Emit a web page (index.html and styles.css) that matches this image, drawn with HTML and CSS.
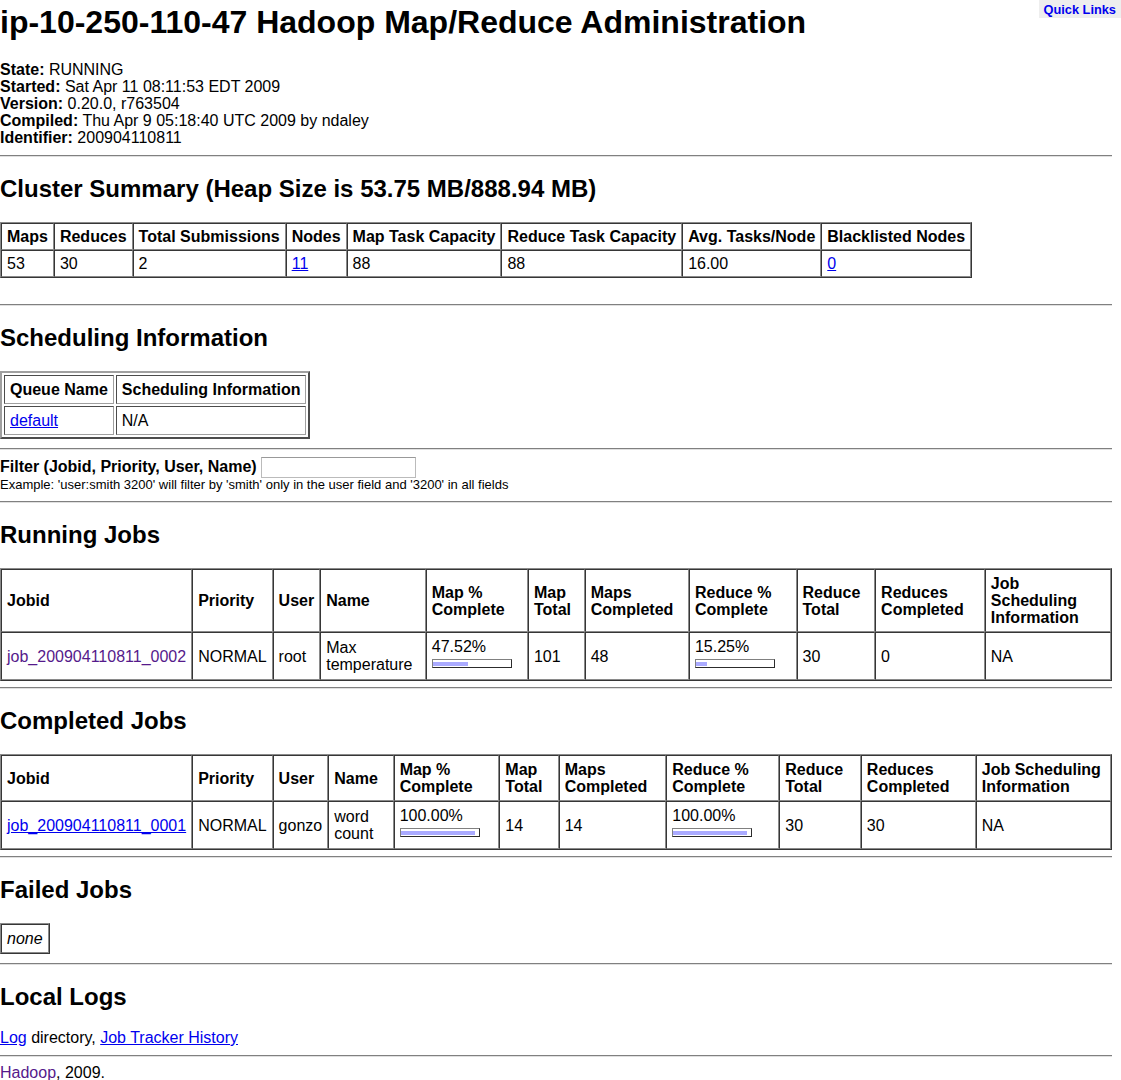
FILE: index.html
```
<!DOCTYPE html>
<html>
<head>
<meta charset="utf-8">
<title>ip-10-250-110-47 Hadoop Map/Reduce Administration</title>
<link rel="stylesheet" href="styles.css">
</head>
<body>
<div class="quicklinks"><a href="#quicklinks">Quick Links</a></div>
<h1>ip-10-250-110-47 Hadoop Map/Reduce Administration</h1>
<div class="info">
<b>State:</b> RUNNING<br>
<b>Started:</b> Sat Apr 11 08:11:53 EDT 2009<br>
<b>Version:</b> 0.20.0, r763504<br>
<b>Compiled:</b> Thu Apr 9 05:18:40 UTC 2009 by ndaley<br>
<b>Identifier:</b> 200904110811
</div>
<hr>
<h2>Cluster Summary (Heap Size is 53.75 MB/888.94 MB)</h2>
<table class="grid summary">
<tr><th>Maps</th><th>Reduces</th><th>Total Submissions</th><th>Nodes</th><th>Map Task Capacity</th><th>Reduce Task Capacity</th><th>Avg. Tasks/Node</th><th>Blacklisted Nodes</th></tr>
<tr><td>53</td><td>30</td><td>2</td><td><a href="#">11</a></td><td>88</td><td>88</td><td>16.00</td><td><a href="#">0</a></td></tr>
</table>
<hr>
<h2>Scheduling Information</h2>
<table class="sched">
<tr><th>Queue Name</th><th>Scheduling Information</th></tr>
<tr><td><a href="#">default</a></td><td>N/A</td></tr>
</table>
<hr>
<div class="filter-row"><b>Filter (Jobid, Priority, User, Name)</b> <input type="text" class="filter"></div>
<div class="small">Example: 'user:smith 3200' will filter by 'smith' only in the user field and '3200' in all fields</div>
<hr>
<h2>Running Jobs</h2>
<table class="grid data">
<tr><th>Jobid</th><th>Priority</th><th>User</th><th>Name</th><th>Map % Complete</th><th>Map Total</th><th>Maps Completed</th><th>Reduce % Complete</th><th>Reduce Total</th><th>Reduces Completed</th><th>Job Scheduling Information</th></tr>
<tr><td><a class="visited" href="#">job_200904110811_0002</a></td><td>NORMAL</td><td>root</td><td>Max temperature</td><td>47.52%<div class="bar"><div class="fill" style="width:47.52%"></div></div></td><td>101</td><td>48</td><td>15.25%<div class="bar"><div class="fill" style="width:15.25%"></div></div></td><td>30</td><td>0</td><td>NA</td></tr>
</table>
<hr>
<h2>Completed Jobs</h2>
<table class="grid data">
<tr><th>Jobid</th><th>Priority</th><th>User</th><th>Name</th><th>Map % Complete</th><th>Map Total</th><th>Maps Completed</th><th>Reduce % Complete</th><th>Reduce Total</th><th>Reduces Completed</th><th>Job Scheduling Information</th></tr>
<tr><td><a href="#">job_200904110811_0001</a></td><td>NORMAL</td><td>gonzo</td><td>word count</td><td>100.00%<div class="bar"><div class="fill" style="width:100%"></div></div></td><td>14</td><td>14</td><td>100.00%<div class="bar"><div class="fill" style="width:100%"></div></div></td><td>30</td><td>30</td><td>NA</td></tr>
</table>
<hr>
<h2>Failed Jobs</h2>
<table class="grid failed">
<tr><td><i>none</i></td></tr>
</table>
<hr>
<h2 class="logs-title">Local Logs</h2>
<a href="#">Log</a> directory, <a href="#">Job Tracker History</a>
<hr>
<a class="visited" href="#">Hadoop</a>, 2009.
</body>
</html>
```

FILE: styles.css
```
html, body {
  background: #ffffff;
}
body {
  margin: 0 9px 0 0;
  font-family: "Liberation Sans", Arial, Helvetica, sans-serif;
  font-size: 16px;
  line-height: 17px;
  color: #000;
}
a { color: #0000ee; }
a.visited { color: #551a8b; text-decoration: none; }
h1 {
  font-size: 32px;
  line-height: 37px;
  margin: 4px 0 20px 0;
}
h2 {
  font-size: 24px;
  line-height: 28px;
  margin: 18px 0 19px 0;
}
h2.logs-title { margin-bottom: 18px; }
hr {
  margin: 9px 0 7px 0;
  border: 0;
  border-top: 1px solid #808080;
  border-bottom: 1px solid #e0e0e0;
  height: 0;
}
.data + hr { margin-top: 6px; }
.quicklinks {
  position: absolute;
  top: 0;
  right: 0;
  padding: 1px 5px 1px 4px;
  background: #eee;
  line-height: 15px;
}
.quicklinks a {
  text-decoration: none;
  font-weight: bold;
  font-size: 12.8px;
}
table {
  font-size: 16px;
  line-height: 17px;
}
table.grid {
  border: 1px outset #8a8a8a;
  border-spacing: 0;
}
table.grid th, table.grid td {
  border: 1px inset #8a8a8a;
  padding: 5px;
  text-align: left;
}
table.summary { margin-bottom: 26px; }
table.summary th, table.summary td { padding: 4px 5px; }
table.data { width: 100%; }
table.data td, table.data th { vertical-align: middle; }
table.failed { margin-bottom: 7px; }
table.sched {
  border: 2px outset #a0a0a0;
  border-spacing: 2px;
}
table.sched th, table.sched td {
  border: 1px inset #a0a0a0;
  padding: 5px;
  text-align: left;
}
.filter-row { line-height: 17px; }
.filter {
  box-sizing: border-box;
  width: 155px;
  height: 21px;
  padding: 1px;
  border: 1px solid #bbb;
  border-top-color: #999;
  font-size: 13px;
  vertical-align: middle;
}
.small {
  font-size: 13px;
  line-height: 14px;
  margin-top: 0;
}
.bar {
  width: 74px;
  height: 4px;
  padding: 2px 4px 1px 0;
  border: 1px outset #808080;
  margin: 4px 0 6px 0;
}
.fill {
  height: 4px;
  background: #aaaaff;
}
```
